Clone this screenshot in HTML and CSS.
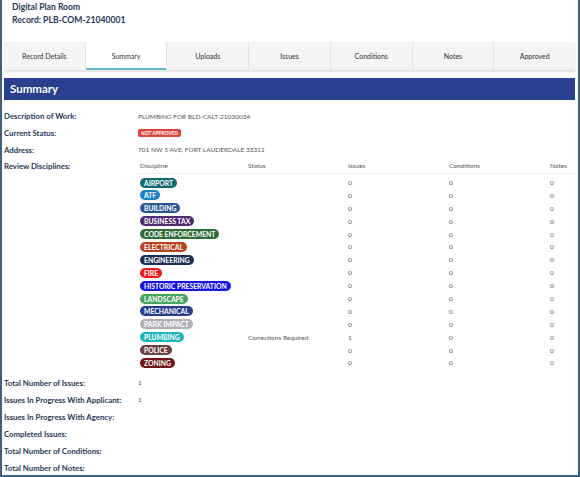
FILE: index.html
```html
<!DOCTYPE html>
<html lang="en">
<head>
    <meta charset="UTF-8">
    <title>Digital Plan Room</title>
    <link rel="stylesheet" href="styles.css">
</head>
<body>
    <div class="frame">
        <header class="page-head">
            <div class="page-title">Digital Plan Room</div>
            <div class="page-title">Record: PLB-COM-21040001</div>
        </header>

        <nav class="tabs">
            <div class="tab">Record Details</div>
            <div class="tab active">Summary</div>
            <div class="tab">Uploads</div>
            <div class="tab">Issues</div>
            <div class="tab">Conditions</div>
            <div class="tab">Notes</div>
            <div class="tab">Approved</div>
        </nav>

        <section class="summary">
            <h2 class="summary-title">Summary</h2>

            <div class="field">
                <div class="label">Description of Work:</div>
                <div class="value">PLUMBING FOR BLD-CALT-21030034</div>
            </div>
            <div class="field">
                <div class="label">Current Status:</div>
                <div class="value"><span class="status-badge">NOT APPROVED</span></div>
            </div>
            <div class="field">
                <div class="label">Address:</div>
                <div class="value">701 NW 5 AVE, FORT LAUDERDALE 33311</div>
            </div>

            <div class="field field-table">
                <div class="label">Review Disciplines:</div>
                <table class="disciplines">
                    <thead>
                        <tr>
                            <th class="col-disc">Discipline</th>
                            <th class="col-status">Status</th>
                            <th class="col-num">Issues</th>
                            <th class="col-num">Conditions</th>
                            <th>Notes</th>
                        </tr>
                    </thead>
                    <tbody id="discipline-rows">
                        <!-- rows filled in by script -->
                    </tbody>
                </table>
            </div>

            <div class="totals">
                <div class="field">
                    <div class="label">Total Number of Issues:</div>
                    <div class="value">1</div>
                </div>
                <div class="field">
                    <div class="label">Issues In Progress With Applicant:</div>
                    <div class="value">1</div>
                </div>
                <div class="field">
                    <div class="label">Issues In Progress With Agency:</div>
                    <div class="value"></div>
                </div>
                <div class="field">
                    <div class="label">Completed Issues:</div>
                    <div class="value"></div>
                </div>
                <div class="field">
                    <div class="label">Total Number of Conditions:</div>
                    <div class="value"></div>
                </div>
                <div class="field">
                    <div class="label">Total Number of Notes:</div>
                    <div class="value"></div>
                </div>
            </div>
        </section>
    </div>

    <script>
        const disciplines = [
            { name: 'AIRPORT', color: '#146b6b' },
            { name: 'ATF', color: '#1a80c8' },
            { name: 'BUILDING', color: '#2b5797' },
            { name: 'BUSINESS TAX', color: '#4d2c72' },
            { name: 'CODE ENFORCEMENT', color: '#2f6d38' },
            { name: 'ELECTRICAL', color: '#b7411c' },
            { name: 'ENGINEERING', color: '#1d3053' },
            { name: 'FIRE', color: '#ee1b1b' },
            { name: 'HISTORIC PRESERVATION', color: '#1414e6' },
            { name: 'LANDSCAPE', color: '#4aa25f' },
            { name: 'MECHANICAL', color: '#293d8e' },
            { name: 'PARK IMPACT', color: '#afb0b8' },
            { name: 'PLUMBING', color: '#1fb6b8', status: 'Corrections Required', issues: 1 },
            { name: 'POLICE', color: '#6c4242' },
            { name: 'ZONING', color: '#6f1515' },
        ];

        const tbody = document.getElementById('discipline-rows');
        disciplines.forEach(d => {
            const row = document.createElement('tr');
            row.innerHTML = `
                <td><span class="badge" style="background-color: ${d.color}">${d.name}</span></td>
                <td>${d.status || ''}</td>
                <td>${d.issues || 0}</td>
                <td>0</td>
                <td>0</td>
            `;
            tbody.appendChild(row);
        });
    </script>
</body>
</html>
```

FILE: styles.css
```css
html, body {
    margin: 0;
    padding: 0;
}
body {
    font-family: Lato, "Open Sans", Arial, sans-serif;
    font-variant-numeric: lining-nums;
    background-color: #ffffff;
    color: #1f3758;
}
.frame {
    box-sizing: border-box;
    width: 580px;
    height: 477px;
    border: 2px solid #3f6080;
    border-top: none;
    padding: 0 2px;
    overflow: hidden;
}
.page-head {
    padding: 1px 8px 0;
    height: 41px;
}
.page-title {
    font-size: 8.6px;
    font-weight: bold;
    line-height: 13px;
    color: #1f3758;
}
.tabs {
    display: flex;
    height: 28px;
    background-color: #f4f4f4;
    box-shadow: 0 2px 2px rgba(0, 0, 0, 0.12);
    margin-right: 1px;
}
.tab {
    flex: 1;
    display: flex;
    align-items: center;
    justify-content: center;
    font-size: 7px;
    color: #333333;
    border-left: 1px solid #e2e2e2;
}
.tab:first-child {
    border-left: none;
}
.tab.active {
    background-color: #ffffff;
    box-shadow: inset 0 -2px 0 #68b8cc;
}
.summary {
    margin-top: 8px;
}
.summary-title {
    margin: 0 1px 8px 0;
    height: 22px;
    line-height: 22px;
    padding-left: 6px;
    background-color: #2a3f8f;
    color: #ffffff;
    font-size: 11.5px;
    font-weight: bold;
}
.field {
    display: flex;
    align-items: center;
    height: 16.7px;
}
.label {
    width: 134px;
    flex-shrink: 0;
    font-size: 7.8px;
    font-weight: bold;
    color: #1f3758;
}
.value {
    font-size: 6.5px;
    color: #555555;
}
.status-badge {
    display: inline-block;
    background-color: #d9463f;
    color: #ffffff;
    font-size: 4.8px;
    font-weight: bold;
    padding: 1px 3px;
    border-radius: 2px;
    line-height: 6px;
}
.field-table {
    align-items: flex-start;
    height: auto;
}
.field-table .label {
    line-height: 16.7px;
}
.disciplines {
    border-collapse: collapse;
    width: 437px;
    font-size: 6.5px;
    color: #555555;
}
.disciplines th {
    font-weight: normal;
    text-align: left;
    height: 15px;
    padding: 0 2px;
    border-bottom: 1px solid #ececec;
}
.disciplines td {
    height: 12.9px;
    padding: 0 2px;
}
.col-disc {
    width: 104px;
}
.col-status {
    width: 96px;
}
.col-num {
    width: 97px;
}
.disciplines tbody tr:first-child td {
    padding-top: 2px;
}
.badge {
    display: inline-block;
    color: #ffffff;
    font-size: 6.8px;
    font-weight: bold;
    line-height: 10px;
    padding: 0 4px;
    border-radius: 5px;
}
.totals {
    margin-top: 5px;
}
.totals .field {
    height: 17px;
}
```
